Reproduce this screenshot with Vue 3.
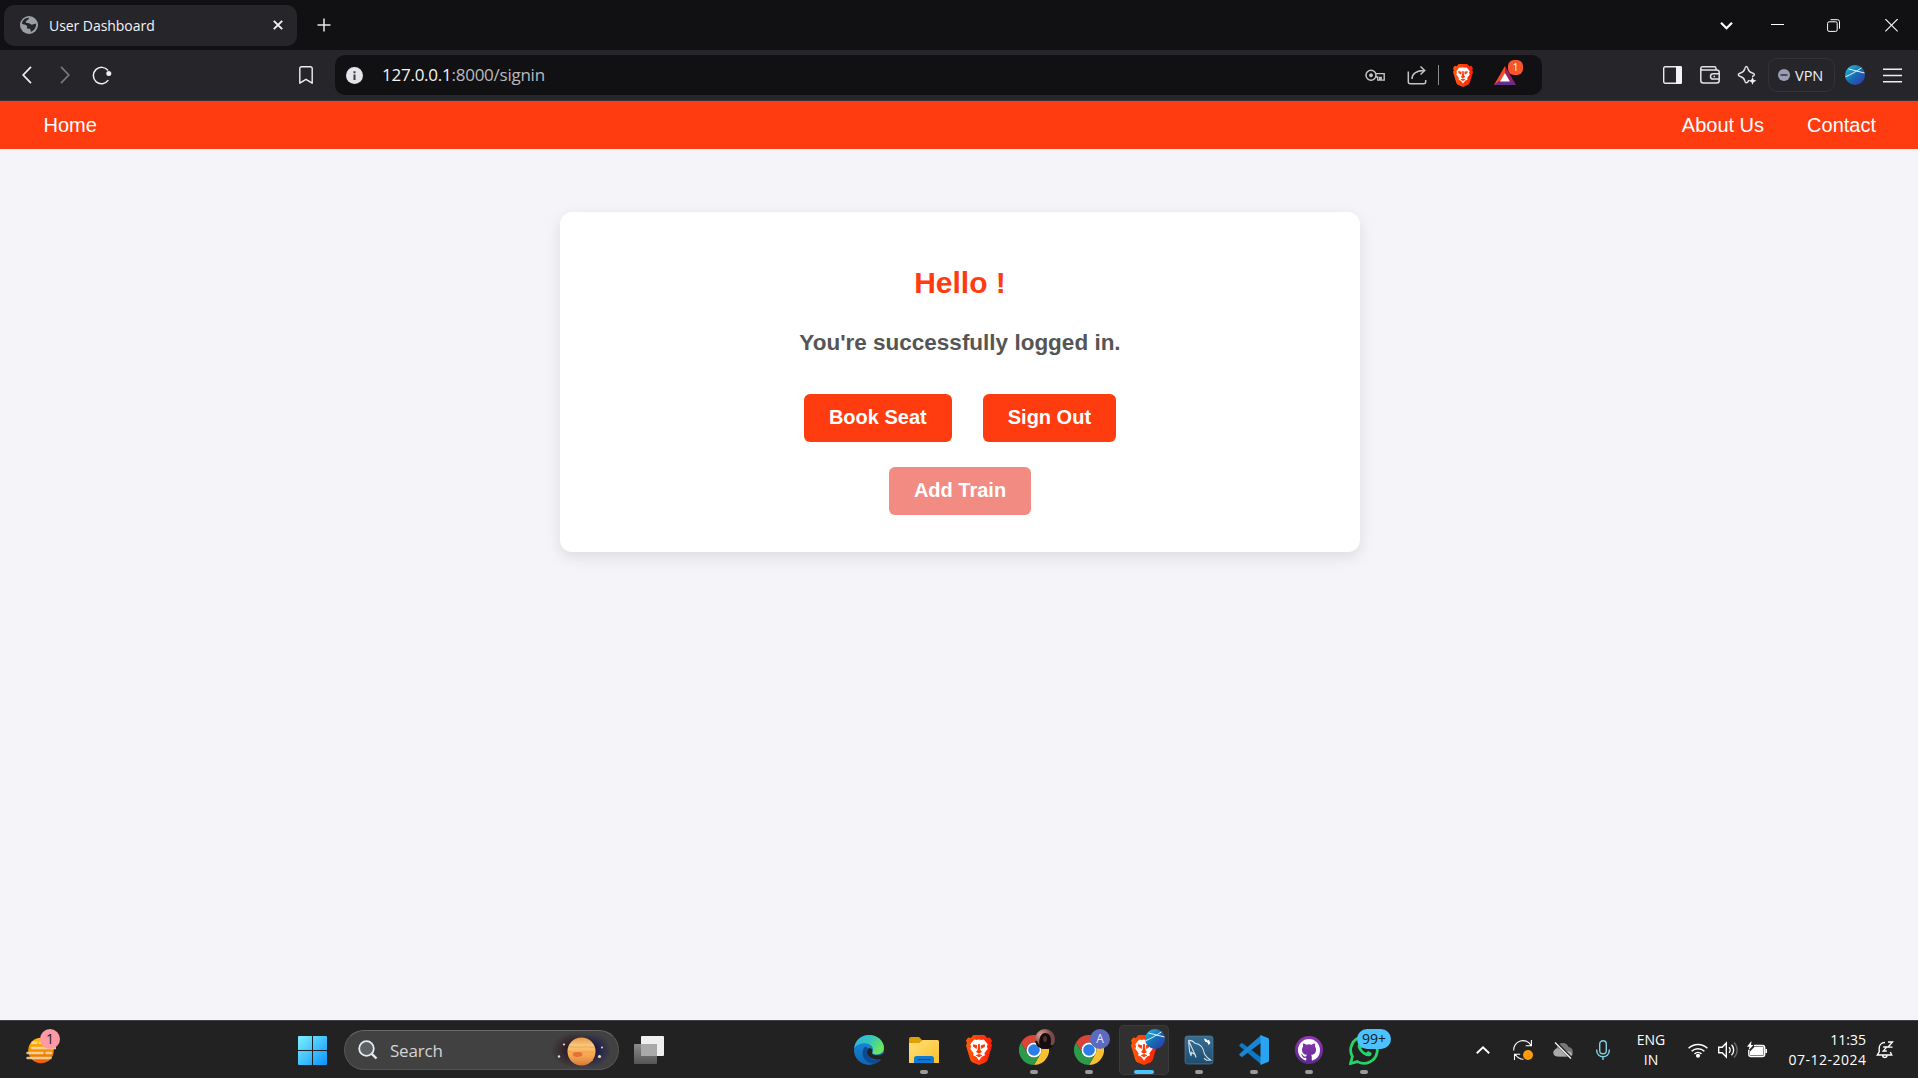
<script setup>
const apps = [
  { id: 'edge' },
  { id: 'files', running: true },
  { id: 'brave' },
  { id: 'chrome', running: true, badge: 'photo' },
  { id: 'chrome', running: true, badge: 'letter' },
  { id: 'brave', active: true, badge: 'globe' },
  { id: 'mysql', running: true },
  { id: 'vscode', running: true },
  { id: 'github', running: true },
  { id: 'whatsapp', running: true, badge: 'count' },
]
</script>

<template>
  <div class="screen">
    <svg class="defs" width="0" height="0" aria-hidden="true">
      <defs>
        <linearGradient id="g-brave" x1="0" y1="0" x2="1" y2="0"><stop offset="0" stop-color="#ff5a0a" /><stop offset="1" stop-color="#ff1f08" /></linearGradient>
        <linearGradient id="g-globe" x1="0" y1="0" x2="1" y2="1"><stop offset="0" stop-color="#35bfdc" /><stop offset=".5" stop-color="#1470b4" /><stop offset="1" stop-color="#3b2bb0" /></linearGradient>
        <linearGradient id="g-win" x1="0" y1="0" x2="1" y2="1"><stop offset="0" stop-color="#7df0ff" /><stop offset="1" stop-color="#0a94fb" /></linearGradient>
        <linearGradient id="g-sun" x1="0" y1="0" x2="0" y2="1"><stop offset="0" stop-color="#ffc400" /><stop offset="1" stop-color="#ee5b07" /></linearGradient>
        <linearGradient id="g-edge1" x1="0" y1="0" x2="1" y2=".5"><stop offset="0" stop-color="#2bb3e8" /><stop offset=".5" stop-color="#32c5c0" /><stop offset="1" stop-color="#6be85c" /></linearGradient>
        <linearGradient id="g-edge2" x1="0" y1="0" x2="0" y2="1"><stop offset="0" stop-color="#1b8fdc" /><stop offset="1" stop-color="#1064b4" /></linearGradient>
        <linearGradient id="g-folder" x1="0" y1="0" x2="1" y2="1"><stop offset="0" stop-color="#ffe07a" /><stop offset="1" stop-color="#fbc02d" /></linearGradient>
        <linearGradient id="g-mysql" x1="0" y1="0" x2="0" y2="1"><stop offset="0" stop-color="#386d92" /><stop offset="1" stop-color="#1d4e70" /></linearGradient>
        <linearGradient id="g-git" x1="0" y1="0" x2="0" y2="1"><stop offset="0" stop-color="#9238b8" /><stop offset="1" stop-color="#5c2a90" /></linearGradient>
        <linearGradient id="g-planet" x1="0" y1="0" x2="0" y2="1"><stop offset="0" stop-color="#e99a48" /><stop offset=".3" stop-color="#f8ca80" /><stop offset=".5" stop-color="#fbb158" /><stop offset=".7" stop-color="#f3a14e" /><stop offset="1" stop-color="#d9783b" /></linearGradient>
        <radialGradient id="g-photo" cx=".3" cy=".3"><stop offset="0" stop-color="#e0a49a" /><stop offset="1" stop-color="#7a4a48" /></radialGradient>
        <linearGradient id="g-tv" x1="0" y1="0" x2="0" y2="1"><stop offset="0" stop-color="#8b8b8b" /><stop offset="1" stop-color="#555" /></linearGradient>
      </defs>
      <symbol id="lion" viewBox="0 0 26 30">
        <path fill="url(#g-brave)" d="M7.5 0h11l2.8 2.900 2.500-.5 2.200 3-1 2.800 1 2.200-4 13.500c-.5 1.700-1.400 2.700-2.800 3.600L13 30l-6.200-2.500C5.400 26.600 4.500 25.600 4 23.900L0 10.400l1-2.200-1-2.800 2.200-3 2.500.5z" />
        <path fill="#fff" d="M8.200 4.500 10.500 5l2.500-.6 2.500.6 2.300-.5 2.700 3.300 1.200 1.500-.8 2.200.8 2.200-3.300 4.500.6 2-3.200 1.500L13 25.500l-2.800-3.800L7 20.200l.6-2-3.300-4.500.8-2.200-.8-2.200 1.200-1.500z" />
        <path fill="#ff3b0a" d="m7 9.200 4.200 1-.5 3.800-3.500-2.200zM19 9.200l-4.200 1 .5 3.800 3.500-2.200zM12.200 9h1.600l.6 6 1.600 2-3 1.700-3-1.700 1.600-2zM9.500 20.200l3.500-1.300 3.500 1.300L13 22.300z" />
      </symbol>
      <symbol id="globe" viewBox="0 0 20 20">
        <circle cx="10" cy="10" r="10" fill="url(#g-globe)" />
        <path d="M.5 11.800C6 9.500 12 6 16.500 2.800M3.500 4C9 5.500 14 6.500 19.500 8" fill="none" stroke="#dff6ff" stroke-width="1" />
      </symbol>
    </svg>

    <header class="tabs">
      <div class="tab">
        <svg class="fav" viewBox="0 0 18 18" width="18" height="18"><circle cx="9" cy="9" r="9" fill="#9aa0a6" /><path fill="#26262a" d="M9.500 1.900c-1.500.4-.8 1.700-2.200 2.300-1.300.5-2 1.300-1.300 2.200.9 1 2.700.2 3.600 1.200.8 1 2 1.300 3.200 1 1.300-.3 1.800-1 3.200-.8.500 3-1.300 6.600-4.800 7.900-1.300-.4-.2-2-1.200-2.900h-2c-1.300-.2-1.200-1.300-.7-2.200-.6-1.200-1.600-1.800-3-2.100l-2.300-.6C2 4.500 5.500 1.500 9.500 1.900z" /></svg>
        <span class="tab-title">User Dashboard</span>
        <svg class="tab-x" viewBox="0 0 10 10" width="10" height="10"><path d="m.8.800 8.400 8.400M9.200.8.800 9.200" stroke="#f2f2f4" stroke-width="1.900" /></svg>
      </div>
      <svg class="plus" viewBox="0 0 14 14" width="14" height="14"><path d="M7 .5v13M.5 7h13" stroke="#e8e8ea" stroke-width="1.500" /></svg>
      <div class="win-ctl">
        <svg viewBox="0 0 13 13" width="13" height="13"><path d="m1 3.800 5.500 5.500L12 3.800" fill="none" stroke="#fff" stroke-width="2.200" /></svg>
        <svg viewBox="0 0 13 13" width="13" height="13"><path d="M0 5.500h13" stroke="#fff" /></svg>
        <svg viewBox="0 0 13 13" width="13" height="13" fill="none" stroke="#fff"><path d="M3.500.7h7a2 2 0 0 1 2 2v7" /><rect x=".6" y="2.800" width="9.600" height="9.600" rx="1.500" /></svg>
        <svg viewBox="0 0 13 13" width="13" height="13"><path d="m.3 0 12.400 12.400M12.700 0 .3 12.400" stroke="#fff" stroke-width="1.100" /></svg>
      </div>
    </header>

    <div class="toolbar">
      <div class="nav-icons">
        <svg viewBox="0 0 10 18" width="10" height="18"><path d="M9 .8 1.200 9 9 17.200" fill="none" stroke="#f0f0f2" stroke-width="1.700" /></svg>
        <svg viewBox="0 0 10 18" width="10" height="18"><path d="M1 .8 8.800 9 1 17.200" fill="none" stroke="#77777c" stroke-width="1.700" /></svg>
        <svg class="reload" viewBox="0 0 20 19" width="20" height="19"><path d="M16.300 14.200A8.200 8.200 0 1 1 16 4.500" fill="none" stroke="#f0f0f2" stroke-width="1.500" /><circle cx="16.800" cy="7.500" r="2.500" fill="#f0f0f2" /></svg>
        <svg class="mark" viewBox="0 0 14 18" width="14" height="18"><path d="M2.500.8h9A1.700 1.700 0 0 1 13.200 2.500v14.700L7 13.300.8 17.200V2.500A1.700 1.700 0 0 1 2.500.8z" fill="none" stroke="#f0f0f2" stroke-width="1.400" stroke-linejoin="round" /></svg>
      </div>
      <div class="address">
        <svg class="info" viewBox="0 0 17 17" width="17" height="17"><circle cx="8.500" cy="8.500" r="8.500" fill="#e4e4ea" /><path d="M7.500 7.500h2V13h-2zM7.500 4.200h2v2h-2z" fill="#3a3a40" /></svg>
        <span class="url"><b>127.0.0.1</b>:8000/signin</span>
        <div class="addr-icons">
          <svg class="key" viewBox="0 0 20 13" width="20" height="13" fill="none" stroke="#c4c4c8"><circle cx="6" cy="6.300" r="5" stroke-width="1.500" /><circle cx="6" cy="6.300" r="1.500" fill="#c4c4c8" /><path d="M10.700 4.600h8.500v6.500h-3V8.500h-1.500v2.600h-2V8h-2.300" stroke-width="1.400" /></svg>
          <svg class="share" viewBox="0 0 20 20" width="20" height="20" fill="none" stroke="#c4c4c8" stroke-width="1.500"><path d="M1.300 6.500v10.200a2 2 0 0 0 2 2h13.400a2 2 0 0 0 2-2V15M5 14c0-5 3.500-8 11.500-8.500M13.500 1.500l4.200 4-4.200 4" /></svg>
          <i class="divider"></i>
          <svg class="shield" width="20" height="23"><use href="#lion" width="20" height="23" /></svg>
          <div class="bat">
            <svg viewBox="0 0 22 19" width="22" height="19"><path d="M11 0 0 19h4.500L11 8z" fill="#ff4a26" /><path d="m11 0 11 19-5-2.500L11 8z" fill="#9e1f63" /><path d="M0 19h22l-4.500-4H5z" fill="#662d91" /><path d="m11 7 5 8.500H6z" fill="#fff" /></svg>
            <span class="bat-n">1</span>
          </div>
        </div>
      </div>
      <div class="right-icons">
        <svg viewBox="0 0 19 18" width="19" height="18"><rect x=".7" y=".7" width="17.600" height="16.600" rx="1.500" fill="none" stroke="#eaeaec" stroke-width="1.400" /><path fill="#f4f4f6" d="M13 0h4.500A1.500 1.500 0 0 1 19 1.500v15a1.500 1.500 0 0 1-1.500 1.500H13z" /></svg>
        <svg class="wallet" viewBox="0 0 20 18" width="20" height="18" fill="none" stroke="#e4e4e8" stroke-width="1.500"><path d="M16 4V2.500A1.700 1.700 0 0 0 14.300.8H2.500A1.700 1.700 0 0 0 .8 2.500v12A2.500 2.500 0 0 0 3.300 17h13.400a2.500 2.500 0 0 0 2.500-2.500V6.200A2.200 2.200 0 0 0 17 4H2.500C1.500 4 .8 3.400.8 2.500M19.200 7.700h-6a2.700 2.700 0 0 0 0 5.400h6M13.500 10.400H15" /></svg>
        <svg class="sparkle" viewBox="0 0 20 20" width="20" height="20"><path d="M11.800 15c-.5 1.500-1.300 2.800-2.500 2.800-.9 0-1.200-.8-1.500-2-.7-2.700-1.500-3.500-4.300-4.300-3-.9-3-2.600 0-3.500 2.800-.8 3.600-1.600 4.300-4.300.7-3 2.500-3 3.200 0 .7 2.700 1.500 3.500 4.300 4.300 3 .9 2.800 2.700-.3 3.500" fill="none" stroke="#e4e4e8" stroke-width="1.400" /><path d="m15.500 12 1.200 2.700 2.800 1.100-2.800 1.200-1.200 2.800-1.200-2.800-2.800-1.200 2.800-1.100z" fill="#f0f0f2" /></svg>
        <div class="vpn"><svg viewBox="0 0 12 12" width="12" height="12"><circle cx="6" cy="6" r="6" fill="#9c9cb4" /><path d="M2.500 6h7" stroke="#26262a" stroke-width="1.400" /></svg><span>VPN</span></div>
        <svg class="profile" width="20" height="20"><use href="#globe" width="20" height="20" /></svg>
        <svg class="menu" viewBox="0 0 19 15" width="19" height="15"><path d="M0 1.200h19M0 7.500h19M0 13.800h19" stroke="#f0f0f2" stroke-width="1.500" /></svg>
      </div>
    </div>

    <nav class="site-nav">
      <a class="home">Home</a>
      <a>About Us</a>
      <a>Contact</a>
    </nav>

    <main class="page">
      <section class="card">
        <h1>Hello !</h1>
        <p>You're successfully logged in.</p>
        <div class="row">
          <a class="btn">Book Seat</a>
          <a class="btn">Sign Out</a>
        </div>
        <div class="row second">
          <a class="btn muted">Add Train</a>
        </div>
      </section>
    </main>

    <footer class="taskbar">
      <div class="weather">
        <svg viewBox="0 0 30 27" width="30" height="27"><circle cx="15" cy="13.500" r="12.800" fill="url(#g-sun)" /><path d="M6.500 5.800h4M14 5.800h2M6 11h24M1.500 16h15M20.500 16h4.500M1.500 21h23" stroke="#f6ddb0" stroke-width="2.500" stroke-linecap="round" opacity=".85" /></svg>
        <span class="weather-n">1</span>
      </div>
      <svg class="start" viewBox="0 0 29 29" width="29" height="29"><path fill="url(#g-win)" d="M1 0h13v14H0V1a1 1 0 0 1 1-1zm14 0h13a1 1 0 0 1 1 1v13H15zM0 15h14v14H1a1 1 0 0 1-1-1zm15 0h14v13a1 1 0 0 1-1 1H15z" /></svg>
      <div class="search">
        <svg viewBox="0 0 20 20" width="20" height="20" fill="none"><circle cx="8.500" cy="8.500" r="7.300" fill="#5c6264" stroke="#e6ecee" stroke-width="1.800" /><path d="m13.800 13.800 4.700 4.700" stroke="#e6ecee" stroke-width="2.400" /></svg>
        <span>Search</span>
        <div class="sky">
          <svg viewBox="0 0 60 38" width="60" height="38"><g fill="#ead9c8"><circle cx="12" cy="13.500" r="1.100" /><circle cx="7" cy="25.500" r="1.200" /><circle cx="50" cy="16.500" r="1" /><circle cx="47.500" cy="25.500" r="1.600" /></g><circle cx="29.500" cy="20.500" r="14" fill="url(#g-planet)" /><path d="M17 15.500c8 2 16-1 25 1M16 20.500c9 2 15-.5 26 1M18 28.500c8 2 14 0 23 1" fill="none" stroke="#e89549" stroke-width=".7" /><ellipse cx="25.500" cy="23.500" rx="4.800" ry="2.400" fill="#e4703a" /></svg>
        </div>
      </div>
      <svg class="views" viewBox="0 0 30 28" width="30" height="28"><rect x="7" y="0" width="23" height="20" rx="1" fill="#efefef" /><rect x="0" y="8" width="23" height="20" rx="1" fill="url(#g-tv)" /><path d="M7 8h16v12H7z" fill="#aaa" /></svg>

      <div class="apps">
        <div v-for="(app, i) in apps" :key="i" class="app" :class="{ active: app.active }">
          <svg v-if="app.id === 'edge'" viewBox="0 0 30 30" width="30" height="30"><circle cx="15" cy="15" r="15" fill="url(#g-edge2)" /><path d="M.2 13C1.300 5 7.500 0 15 0c8.500 0 15 6 15 12.800 0 4-3.200 6.700-7.400 6.700-3 0-5-1-4.500-2 .4-.9.900-1.500.9-3C19 11 15.500 8.400 11 8.200 6.500 8 2.500 10 .2 13z" fill="url(#g-edge1)" /><path d="M11.500 11.500C6.500 15 7.500 26 18 28.500c4 .8 7.500-1.500 10-4.500-6 2.500-13 .5-14.500-5-.6-2.300-.2-4 1-5z" fill="#0c4a92" /><path d="M18.200 17.500c-.8 3 7 3.800 12.300.5v4.500l-2 1.200c-6 2.200-14-.1-15.300-5.200-.5-2.500.3-4.500 2.300-5.500 2 0 3.500 2.500 2.700 4.500z" fill="#222" /></svg>

          <svg v-else-if="app.id === 'files'" viewBox="0 0 30 30" width="30" height="30"><path d="M0 4a2 2 0 0 1 2-2h8l3 3v6H0z" fill="#dfa000" /><path d="M0 8h10.500l3-3H28.500A1.500 1.500 0 0 1 30 6.500V28H0z" fill="url(#g-folder)" /><path d="M5 28v-4.500A2.500 2.500 0 0 1 7.500 21h15a2.500 2.500 0 0 1 2.500 2.500V28z" fill="#0f7ad1" /><path d="M8.500 24.600h13" stroke="#0b4f9a" stroke-width="1.200" /></svg>

          <svg v-else-if="app.id === 'brave'" width="26" height="30"><use href="#lion" width="26" height="30" /></svg>

          <svg v-else-if="app.id === 'chrome'" viewBox="0 0 30 30" width="30" height="30"><path fill="#db4437" d="M2 7.500a15 15 0 0 1 26 0H15A7.500 7.500 0 0 0 8.500 18.750z" /><path fill="#fbc02d" d="M28 7.500H15a7.500 7.500 0 0 1 6.500 11.250L15 30A15 15 0 0 0 28 7.500z" /><path fill="#2b9a4b" d="M2 7.500 8.500 18.750a7.500 7.500 0 0 0 13 0L15 30A15 15 0 0 1 2 7.500z" /><circle cx="15" cy="15" r="7.500" fill="#fff" /><circle cx="15" cy="15" r="5.800" fill="#2b7de9" /></svg>

          <svg v-else-if="app.id === 'mysql'" viewBox="0 0 30 30" width="30" height="30"><rect x="1" y="1" width="28" height="28" rx="2.500" fill="url(#g-mysql)" stroke="#5d88a5" stroke-width=".6" /><path d="M4.500 5.500c3-.7 5 .8 6.500 2.700 5 .5 8.500 4.800 9.500 10.800 1.500 2.500 3.500 4.500 6 6l-4 .2-2.500-2M11 19.500l-3.500-2.200-.7 2.700C4.500 15.500 5.500 11 4.500 5.500zM11 19.500l1 3M7 18l.5 2.500" fill="none" stroke="#d5e5ee" stroke-width="1.100" /><path d="m20 3.500 2 .5 1.500 1.500 1.500-.5 1.500 3-2 2-1-2.500-2.500-1z" fill="#fff" /></svg>

          <svg v-else-if="app.id === 'vscode'" viewBox="0 0 30 30" width="30" height="30"><path d="m3.500 8.200 18.800 14.400v7L.6 11.200a1 1 0 0 1 0-1.500l1.700-1.500a1 1 0 0 1 1.200 0z" fill="#0b79c4" /><path d="m3.500 21.800 18.800-14.400V0L.6 18.800a1 1 0 0 0 0 1.500l1.700 1.500a1 1 0 0 0 1.200 0z" fill="#1787d4" /><path d="M21.500 0 29 3a1.600 1.600 0 0 1 1 1.500v21a1.600 1.600 0 0 1-1 1.500l-7.500 3z" fill="#28a4f0" /></svg>

          <svg v-else-if="app.id === 'github'" viewBox="0 0 30 30" width="30" height="30"><circle cx="15" cy="15" r="14" fill="url(#g-git)" /><path transform="translate(4 4) scale(1.375)" fill="#fff" d="M8 0C3.580 0 0 3.580 0 8c0 3.540 2.290 6.530 5.470 7.590.4.070.55-.17.55-.38 0-.19-.01-.82-.01-1.490-2.010.37-2.530-.49-2.690-.94-.09-.23-.48-.94-.82-1.130-.28-.15-.68-.52-.01-.53.63-.01 1.080.58 1.230.82.72 1.210 1.870.87 2.330.66.07-.52.28-.87.51-1.070-1.780-.2-3.640-.89-3.640-3.950 0-.87.31-1.590.82-2.150-.08-.2-.36-1.020.08-2.120 0 0 .67-.21 2.200.82a7.600 7.600 0 0 1 4 0c1.530-1.040 2.200-.82 2.200-.82.44 1.100.16 1.920.08 2.120.51.56.82 1.270.82 2.150 0 3.070-1.870 3.750-3.650 3.950.29.25.54.73.54 1.480 0 1.070-.01 1.930-.01 2.200 0 .21.15.46.55.38A8 8 0 0 0 16 8c0-4.420-3.580-8-8-8z" /></svg>

          <svg v-else viewBox="0 0 30 30" width="30" height="30"><path d="m1.500 28.500 1.900-7A13.300 13.300 0 1 1 8.500 26.600z" fill="#222" stroke="#25d366" stroke-width="2.800" /><path d="M10 8c-2 1.500-1.700 4.500.5 7.500 3 4 7 6.500 10 5.700 1.800-.5 2.300-2 2-3.500l-3.500-1.800-1.800 1.800c-2.300-1-3.800-2.500-4.800-4.500L14 11.500 12 8z" fill="#25d366" /></svg>

          <svg v-if="app.badge === 'photo'" class="badge" viewBox="0 0 20 20" width="20" height="20"><circle cx="10" cy="10" r="10" fill="url(#g-photo)" /><path d="M5 18c-2-6 0-14 5-14s7 5 5.500 12l3 .5A10 10 0 0 1 5 18.500z" fill="#150d10" /><ellipse cx="10" cy="10" rx="2" ry="3" fill="#51302c" /><path d="M1 12c1 4 4 7 9 7" stroke="#180f12" stroke-width="2" fill="none" /></svg>
          <span v-if="app.badge === 'letter'" class="badge letter">A</span>
          <svg v-if="app.badge === 'globe'" class="badge" width="20" height="20"><use href="#globe" width="20" height="20" /></svg>
          <span v-if="app.badge === 'count'" class="badge count">99+</span>
          <i v-if="app.running || app.active" class="dot"></i>
        </div>
      </div>

      <div class="tray">
        <svg class="up" viewBox="0 0 14 14" width="14" height="14"><path d="m.8 10.200 6.200-6 6.200 6" fill="none" stroke="#fff" stroke-width="1.900" /></svg>
        <svg class="sync" viewBox="0 0 20 20" width="20" height="20"><path d="M.7 10.500a9.200 9.200 0 0 1 17.300-5M18.400 0v5.700h-5.700M1.500 20v-5.700h5.700M2.300 14.500c2 3 5 4.700 8.200 4.700" fill="none" stroke="#fff" stroke-width="1.100" /><circle cx="15" cy="15" r="5" fill="#ff9a0a" /></svg>
        <svg class="cloud" viewBox="0 0 20 20" width="20" height="20"><path d="M6 16.500A5 5 0 0 1 4 7.500a6 6 0 0 1 11.500-.5 4.800 4.800 0 0 1 .3 9.500z" fill="#777" /><path d="M4 16.500c-4.500-.5-5-6-1-7.500 5-1.500 7 1 10 2.500 3-1 6 0 6.500 3-.5 1.500-2 2-3.500 2z" fill="#aaa" /><path d="m2.500 2 15.500 16" stroke="#222" stroke-width="3" /><path d="m2 2.500 16 16" stroke="#fff" stroke-width="1.200" /></svg>
        <svg class="mic" viewBox="0 0 14 20" width="14" height="20" fill="none" stroke="#7fd0e4"><rect x="3.700" y=".8" width="6.600" height="13" rx="3.300" stroke-width="1.400" /><path d="M.7 9.500v1a6.300 6.300 0 0 0 12.600 0v-1M7 17v3" stroke-width="1.400" /></svg>
        <div class="lang"><span>ENG</span><span>IN</span></div>
        <svg class="wifi" viewBox="0 0 20 16" width="20" height="16" fill="none" stroke="#fff" stroke-width="1.500"><path d="M.6 6.300a13.300 13.300 0 0 1 18.800 0M3.600 9.300a9 9 0 0 1 12.800 0M6.500 12a5 5 0 0 1 7 0" /><circle cx="10" cy="13.700" r="1.300" fill="#fff" /></svg>
        <svg class="vol" viewBox="0 0 20 18" width="20" height="18" fill="none" stroke="#fff" stroke-width="1.400"><path d="M.7 6.300h3.500L8.300 2v14l-4.100-4.300H.7zM11 6.200a4 4 0 0 1 0 5.600M13.500 3.800a7.300 7.300 0 0 1 0 10.400" /><path d="M16 1.500a10.500 10.500 0 0 1 0 15" stroke="#666" /></svg>
        <svg class="power" viewBox="0 0 21 18" width="21" height="18"><path d="M7 4.500h8.500a2.200 2.200 0 0 1 2.200 2.200v6.600a2.200 2.200 0 0 1-2.200 2.200H4a2.200 2.200 0 0 1-2.200-2.200V9" fill="none" stroke="#fff" stroke-width="1.400" /><path d="M7.500 5.800H16.500v8.500H3V10.500zM18.500 8H20v4h-1.500zM4.500 0 0 5.800h2.500L1.500 9.500 6.500 4H4z" fill="#fff" /></svg>
        <div class="clock"><span>11:35</span><span class="date">07-12-2024</span></div>
        <svg class="bell" viewBox="0 0 18 18" width="18" height="18" fill="none" stroke="#fff"><path d="M9 1.500C5 1.500 3.200 4.500 3.200 7.300v3.500L1.300 14h14.400l-1.400-3M6.500 14.800a2.400 2.400 0 0 0 4.600 0" stroke-width="1.400" /><path d="M7.200 6h3.600l-3.600 4h3.600M12 1h4.500L12 6.200h4.500" stroke-width="1.300" /></svg>
      </div>
    </footer>
  </div>
</template>

<style>
body {
  margin: 0;
  overflow: hidden;
}
</style>

<style scoped>
.screen {
  width: 1918px;
  height: 1078px;
  display: flex;
  flex-direction: column;
  overflow: hidden;
  background: #f4f4f9;
  font-family: "Open Sans", "Noto Sans", sans-serif;
}
.defs { position: absolute; }
svg { display: block; flex: none; }

.tabs {
  height: 50px;
  box-sizing: border-box;
  background: #111113;
  display: flex;
  align-items: center;
}
.tab {
  width: 293px;
  height: 41px;
  box-sizing: border-box;
  margin-left: 4px;
  padding: 0 14px 0 16px;
  display: flex;
  align-items: center;
  border-radius: 10px;
  background: #26262a;
}
.tab-title {
  margin-left: 11px;
  color: #f4f4f6;
  font-size: 14px;
  letter-spacing: -0.05px;
  flex: 1;
}
.plus { margin-left: 20px; }
.win-ctl {
  margin-left: auto;
  margin-right: 20px;
  display: flex;
  gap: 43px;
}
.win-ctl svg:first-child { margin-right: -5px; }
.win-ctl svg:last-child { margin-left: 2px; }

.toolbar {
  height: 51px;
  box-sizing: border-box;
  border-bottom: 1px solid #35353a;
  background: #26262a;
  display: flex;
  align-items: center;
}
.nav-icons {
  width: 335px;
  box-sizing: border-box;
  padding: 0 22px 0 22px;
  display: flex;
  align-items: center;
}
.nav-icons svg:nth-child(2) { margin-left: 28px; }
.nav-icons .reload { margin-left: 22px; }
.nav-icons .mark { margin-left: auto; }
.address {
  width: 1207px;
  height: 40px;
  box-sizing: border-box;
  padding: 0 19px 0 11px;
  display: flex;
  align-items: center;
  border-radius: 10px;
  background: #111113;
}
.url {
  margin-left: 19px;
  margin-top: -1px;
  color: #b9b9be;
  font-size: 17px;
  letter-spacing: -0.25px;
}
.url b { font-weight: 400; color: #f4f4f6; }
.addr-icons {
  margin-left: auto;
  display: flex;
  align-items: center;
}
.share { margin-left: 22px; }
.divider { width: 1px; height: 20px; margin: 0 14px 0 11px; background: #8a8a90; }
.bat { position: relative; margin-left: 21px; margin-right: 7px; }
.bat-n {
  position: absolute;
  left: 14px;
  top: -6px;
  width: 15px;
  height: 15px;
  border-radius: 6px;
  background: #fb542b;
  color: #fff;
  font-size: 10px;
  line-height: 15px;
  text-align: center;
}
.right-icons {
  margin-left: auto;
  margin-right: 16px;
  display: flex;
  align-items: center;
}
.wallet { margin-left: 18px; }
.sparkle { margin-left: 17px; }
.vpn {
  width: 67px;
  height: 34px;
  box-sizing: border-box;
  margin-left: 11px;
  padding-left: 9px;
  display: flex;
  align-items: center;
  gap: 5px;
  border: 1px solid #323237;
  border-radius: 9px;
  color: #f0f0f2;
  font-size: 14.5px;
}
.profile { margin-left: 10px; }
.menu { margin-left: 18px; }

.site-nav {
  height: 48px;
  box-sizing: border-box;
  padding: 0 42px 0 43.500px;
  display: flex;
  align-items: center;
  gap: 43px;
  background: #ff3c10;
  color: #fff;
  font: 20px/23px "Liberation Sans", Arial, sans-serif;
}
.home { margin-right: auto; }

.page {
  flex: 1;
  display: flex;
  justify-content: center;
  align-items: flex-start;
  padding: 63px 0 0 2px;
  font-family: "Liberation Sans", Arial, sans-serif;
}
.card {
  width: 800px;
  height: 340px;
  box-sizing: border-box;
  padding-top: 54px;
  display: flex;
  flex-direction: column;
  align-items: center;
  border-radius: 12px;
  background: #fff;
  box-shadow: 0 5px 15px rgba(0, 0, 0, 0.1);
}
.card h1 {
  margin: 0;
  color: #ff3c10;
  font-size: 30px;
  line-height: 34px;
}
.card p {
  margin: 30px 0 0;
  color: #555;
  font-size: 22.5px;
  line-height: 26px;
  font-weight: 700;
}
.row { display: flex; gap: 31px; margin-top: 38px; }
.row.second { margin-top: 25px; }
.btn {
  height: 48px;
  box-sizing: border-box;
  padding: 12px 25px 0;
  border-radius: 6px;
  background: #ff3c10;
  color: #fff;
  font-size: 20px;
  line-height: 23px;
  font-weight: 700;
}
.btn.muted { background: #f28b82; }

.taskbar {
  height: 58px;
  box-sizing: border-box;
  border-top: 1px solid #3c4244;
  background: #222;
  display: flex;
  align-items: center;
  color: #fff;
}
.weather { position: relative; margin: 1px 0 0 26px; }
.weather-n {
  position: absolute;
  left: 14px;
  top: -8px;
  width: 20px;
  height: 20px;
  border-radius: 50%;
  background: #ff99a4;
  color: #222;
  font-size: 14px;
  line-height: 20px;
  text-align: center;
}
.start { margin: 2px 0 0 242px; }
.search {
  width: 275px;
  height: 40px;
  box-sizing: border-box;
  margin: 1px 0 0 17px;
  padding-left: 13px;
  display: flex;
  align-items: center;
  border: 1px solid #555;
  border-top-color: #6a6a6a;
  border-radius: 20px;
  background: #414141;
  color: #d4d4d4;
  font-size: 17px;
  letter-spacing: -0.2px;
}
.search span { margin-left: 12px; }
.sky {
  margin-left: auto;
  margin-right: 6px;
  background: radial-gradient(ellipse 25px 18px at 24px 19px, #2c1822 30%, transparent 100%), radial-gradient(ellipse 19px 17px at 40px 19px, #1f1f50 30%, transparent 100%);
}
.views { margin: 1px 0 0 15px; }
.apps { margin-left: 180px; display: flex; gap: 5px; }
.app {
  position: relative;
  width: 50px;
  height: 50px;
  margin-top: 1px;
  display: flex;
  align-items: center;
  justify-content: center;
  border-radius: 5px;
}
.app.active { background: #303030; box-shadow: inset 0 0 0 1px #3b3b3b; }
.badge { position: absolute; left: 26px; top: 4px; }
.app.active > svg:first-child { margin-left: -1px; }
.letter {
  width: 20px;
  height: 20px;
  border-radius: 50%;
  background: #5c6bc0;
  color: #e4e6fa;
  font-size: 12px;
  line-height: 20px;
  text-align: center;
}
.count {
  left: 18px;
  width: 34px;
  height: 20px;
  border-radius: 10px;
  background: #4cc2ff;
  color: #10202a;
  font-size: 14px;
  line-height: 20px;
  text-align: center;
}
.dot {
  position: absolute;
  left: 21px;
  bottom: 1px;
  width: 8px;
  height: 4px;
  border-radius: 2px;
  background: #9a9a9a;
}
.active .dot { left: 15px; width: 20px; background: #4cc2ff; }

.tray {
  margin-left: auto;
  margin-right: 24px;
  display: flex;
  align-items: center;
}
.sync { margin-left: 23px; }
.cloud { margin-left: 20px; }
.mic { margin-left: 23px; }
.lang, .clock {
  display: flex;
  flex-direction: column;
  font-size: 14px;
  line-height: 20px;
}
.lang { width: 36px; margin-left: 23px; align-items: center; }
.wifi { margin-left: 19px; }
.vol { margin-left: 10px; }
.power { margin-left: 9px; }
.clock { width: 80px; margin-left: 18px; align-items: flex-end; white-space: nowrap; }
.date { letter-spacing: 0.5px; margin-right: -0.5px; }
.bell { margin-left: 10px; }
</style>
